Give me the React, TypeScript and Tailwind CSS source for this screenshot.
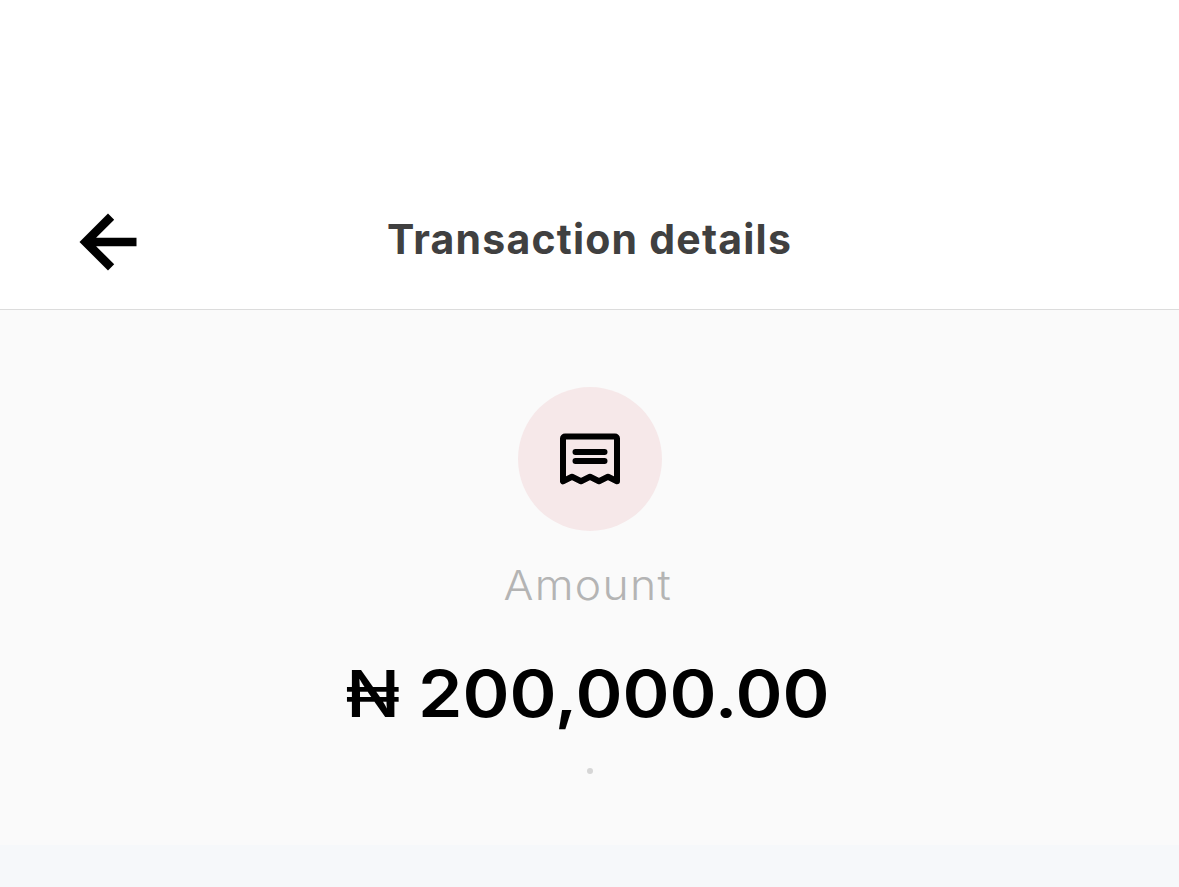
import { FC } from "react";

const BackArrow: FC = () => (
  <svg width="58" height="58" viewBox="0 0 58 58" fill="currentColor">
    <path d="M.5 29 29 .5l6.2 6.2L17.1 24.8H57.5v8.4H17.1L35.2 51.3 29 57.5z" />
  </svg>
);

const ReceiptIcon: FC = () => (
  <svg
    width="60"
    height="52"
    viewBox="0 0 60 52"
    fill="none"
    stroke="currentColor"
    strokeWidth="6"
    strokeLinecap="round"
    strokeLinejoin="round"
  >
    <path d="M3 48.3V5.5a2 2 0 0 1 2-2h50a2 2 0 0 1 2 2v42.8l-9-4.5-9 4.5-9-4.5-9 4.5-9-4.5z" />
    <path d="M15.5 19h29M15.5 28h29" />
  </svg>
);

export default function App() {
  return (
    <div className="flex h-[887px] w-full flex-col overflow-hidden bg-[#fafafa] font-['Inter',sans-serif]">
      <header className="grid h-[310px] grid-cols-[1fr_auto_1fr] items-center border-b border-[#dcdcdc] bg-white px-[79px] pt-[174px]">
        <button className="text-black" aria-label="Back">
          <BackArrow />
        </button>
        <h1 className="-mt-1.5 text-[41px] leading-[50px] font-bold tracking-[1.2px] whitespace-nowrap text-[#404040]">
          Transaction details
        </h1>
      </header>

      <main className="flex h-[535px] flex-col items-center pt-[77px]">
        <div className="flex size-36 items-center justify-center rounded-full bg-[#f6e8e9] text-black">
          <ReceiptIcon />
        </div>
        <p className="mt-[29px] mr-[3px] scale-x-[1.085] text-[41px] leading-[50px] font-light tracking-[1.2px] text-[#b4b4b4]">
          Amount
        </p>
        <p className="mt-[44px] mr-[3px] scale-x-[1.098] text-[65px] leading-[80px] font-semibold whitespace-nowrap text-black">
          <span className="font-medium">₦</span> 200,000.00
        </p>
        <span className="mt-[34px] size-1.5 rounded-full bg-[#d6d6d6]" />
      </main>

      <div className="flex-1 bg-[#f6f8fa]" />
    </div>
  );
}
